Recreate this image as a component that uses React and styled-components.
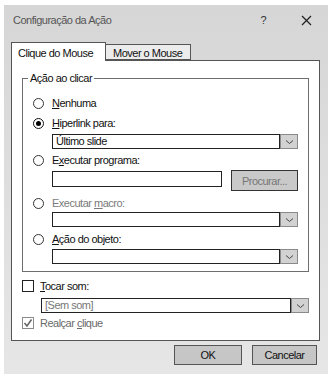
import styled, { createGlobalStyle } from 'styled-components';

const GlobalStyle = createGlobalStyle`
    html, body {
        margin: 0;
        padding: 0;
        background: #fff;
    }
    body {
        font-family: "Liberation Sans", Arial, sans-serif;
        font-size: 11px;
        letter-spacing: -0.5px;
        color: #111;
        white-space: nowrap;
    }
`;

const Chevron = () => (
    <svg width="9" height="6" viewBox="0 0 9 6">
        <polyline points="1,1.5 4.5,4.5 8,1.5" fill="none" stroke="#444" strokeWidth="1" />
    </svg>
);

const CloseIcon = () => (
    <svg width="11" height="11" viewBox="0 0 11 11">
        <line x1="1" y1="1" x2="10" y2="10" stroke="#222" strokeWidth="1.3" />
        <line x1="10" y1="1" x2="1" y2="10" stroke="#222" strokeWidth="1.3" />
    </svg>
);

const CheckMark = () => (
    <svg width="10" height="10" viewBox="0 0 10 10">
        <polyline points="1.5,5 4,8 8.5,1.5" fill="none" stroke="#666" strokeWidth="1.6" />
    </svg>
);

const Select = ({ value, muted }) => (
    <SelectBox>
        <SelectField $muted={muted}>{value}</SelectField>
        <ArrowBox><Chevron /></ArrowBox>
    </SelectBox>
);

const Radio = ({ checked, children, disabled, mt }) => (
    <OptionRow $mt={mt} $disabled={disabled}>
        <RadioDot $checked={checked} />
        <span>{children}</span>
    </OptionRow>
);

export default function App() {
    return (
        <>
            <GlobalStyle />
            <Dialog>
                <TitleBar>
                    <Title>Configuração da Ação</Title>
                    <TitleButtons>
                        <span>?</span>
                        <CloseIcon />
                    </TitleButtons>
                </TitleBar>

                <Tabs>
                    <Tab $active $w={95}>Clique do Mouse</Tab>
                    <Tab $w={85}>Mover o Mouse</Tab>
                </Tabs>

                <Panel>
                    <Group>
                        <Legend>Ação ao clicar</Legend>
                        <Radio mt={10}><u>N</u>enhuma</Radio>
                        <Radio checked mt={4}><u>H</u>iperlink para:</Radio>
                        <Indent $mt={3}><Select value="Último slide" /></Indent>
                        <Radio mt={3}>E<u>x</u>ecutar programa:</Radio>
                        <Indent $mt={2}>
                            <ProgramRow>
                                <TextInput />
                                <BrowseButton>Procurar...</BrowseButton>
                            </ProgramRow>
                        </Indent>
                        <Radio disabled mt={4}>Executar <u>m</u>acro:</Radio>
                        <Indent $mt={1}><Select value="" /></Indent>
                        <Radio mt={4}><u>A</u>ção do objeto:</Radio>
                        <Indent $mt={2}><Select value="" /></Indent>
                    </Group>

                    <CheckRow $mt={7}>
                        <CheckBox />
                        <span><u>T</u>ocar som:</span>
                    </CheckRow>
                    <SoundSelect>
                        <Select value="[Sem som]" muted />
                    </SoundSelect>
                    <CheckRow $mt={3} $disabled>
                        <CheckBox $disabled><CheckMark /></CheckBox>
                        <span>Realçar <u>c</u>lique</span>
                    </CheckRow>
                </Panel>

                <Footer>
                    <DialogButton $w={68}>OK</DialogButton>
                    <DialogButton $w={65}>Cancelar</DialogButton>
                </Footer>
            </Dialog>
        </>
    );
}

const Dialog = styled.div`
    display: flex;
    flex-direction: column;
    width: 324px;
    height: 369px;
    margin: 5px 0 0 4px;
    background: linear-gradient(#d6d6d6, #e6e6e6);
    box-sizing: border-box;
`

const TitleBar = styled.div`
    display: flex;
    align-items: center;
    justify-content: space-between;
    height: 30px;
    padding: 0 16px 0 9px;
`

const Title = styled.div`
    color: #555;
`

const TitleButtons = styled.div`
    display: flex;
    align-items: center;
    gap: 35px;
    color: #333;
`

const Tabs = styled.div`
    display: flex;
    align-items: flex-end;
    height: 18px;
    margin: 7px 0 0 7px;
`

const Tab = styled.div`
    position: relative;
    z-index: 1;
    box-sizing: border-box;
    width: ${p => p.$w}px;
    height: ${p => (p.$active ? 19 : 16)}px;
    margin-bottom: ${p => (p.$active ? -1 : 0)}px;
    padding: ${p => (p.$active ? '3px 0 0 6px' : '1px 0 0 7px')};
    background: ${p => (p.$active ? '#fff' : '#ececec')};
    border: 1px solid #555;
    border-bottom: ${p => (p.$active ? 'none' : '1px solid #555')};
    border-left: ${p => (p.$active ? '1px solid #555' : 'none')};
    line-height: 14px;
    color: #111;
`

const Panel = styled.div`
    display: flex;
    flex-direction: column;
    box-sizing: border-box;
    height: 281px;
    margin: 0 8px 0 7px;
    background: #fff;
    border: 1px solid #555;
`

const Group = styled.fieldset`
    display: flex;
    flex-direction: column;
    margin: 10px 10px 0 10px;
    padding: 0 10px 7px 10px;
    border: 1px solid #6e6e6e;
    min-width: 0;
`

const Legend = styled.legend`
    margin-left: -5px;
    padding: 0 2px;
    line-height: 14px;
    color: #111;
`

const OptionRow = styled.div`
    display: flex;
    align-items: center;
    gap: 8px;
    height: 16px;
    margin-top: ${p => p.$mt || 0}px;
    color: ${p => (p.$disabled ? '#7a7a7a' : '#111')};
    line-height: 14px;
`

const RadioDot = styled.span`
    display: inline-flex;
    align-items: center;
    justify-content: center;
    box-sizing: border-box;
    width: 11px;
    height: 11px;
    border-radius: 50%;
    border: ${p => (p.$checked ? '1.5px solid #111' : '1px solid #333')};
    background: #fff;

    &::after {
        content: '';
        display: ${p => (p.$checked ? 'block' : 'none')};
        width: 5px;
        height: 5px;
        border-radius: 50%;
        background: #000;
    }
`

const Indent = styled.div`
    margin: ${p => p.$mt || 0}px 0 0 19px;
`

const SelectBox = styled.div`
    display: flex;
    height: 15px;
`

const SelectField = styled.div`
    flex: 1;
    box-sizing: border-box;
    height: 15px;
    padding: 0 0 0 3px;
    border: 1px solid #222;
    background: #fff;
    line-height: 13px;
    color: ${p => (p.$muted ? '#777' : '#111')};
`

const ArrowBox = styled.div`
    display: flex;
    align-items: center;
    justify-content: center;
    box-sizing: border-box;
    width: 18px;
    height: 15px;
    background: #d2d2d2;
    border: 1px solid #8a8a8a;
`

const ProgramRow = styled.div`
    display: flex;
    align-items: flex-start;
    justify-content: space-between;
    height: 21px;
`

const TextInput = styled.div`
    box-sizing: border-box;
    width: 170px;
    height: 16px;
    margin-top: 1px;
    border: 1px solid #222;
    background: #fff;
`

const BrowseButton = styled.div`
    display: flex;
    align-items: center;
    justify-content: center;
    box-sizing: border-box;
    width: 67px;
    height: 21px;
    background: #c9c9c9;
    border: 1px solid #333;
    color: #777;
`

const CheckRow = styled.div`
    display: flex;
    align-items: center;
    gap: 6px;
    height: 14px;
    margin: ${p => p.$mt || 0}px 0 0 10px;
    color: ${p => (p.$disabled ? '#6a6a6a' : '#111')};
    line-height: 14px;
`

const CheckBox = styled.span`
    display: inline-flex;
    align-items: center;
    justify-content: center;
    box-sizing: border-box;
    width: 12px;
    height: 12px;
    background: #fff;
    border: 1px solid ${p => (p.$disabled ? '#8a8a8a' : '#222')};
`

const SoundSelect = styled.div`
    margin: 5px 10px 0 29px;
`

const Footer = styled.div`
    display: flex;
    justify-content: flex-end;
    gap: 10px;
    margin: 4px 11px 0 0;
`

const DialogButton = styled.div`
    display: flex;
    align-items: center;
    justify-content: center;
    box-sizing: border-box;
    width: ${p => p.$w}px;
    height: 20px;
    background: #c6c6c6;
    border: 1px solid #555;
    color: #111;
`
